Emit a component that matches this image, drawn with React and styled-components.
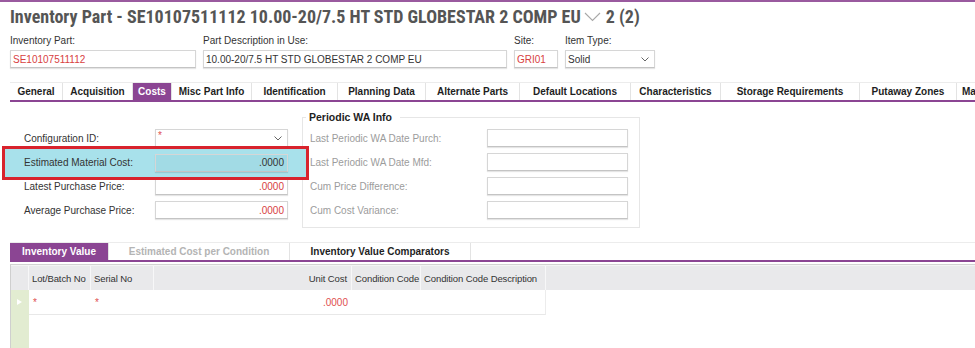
import React from 'react';
import styled, { createGlobalStyle } from 'styled-components';

const PURPLE = '#8b4593';

const GlobalStyle = createGlobalStyle`
  html, body { margin: 0; padding: 0; background: #fff; }
  body {
    font-family: "Liberation Sans", Arial, sans-serif;
    font-size: 10px;
    color: #333;
    width: 975px;
    height: 348px;
    overflow: hidden;
  }
  * { box-sizing: border-box; }
`;

const Page = styled.div`
  width: 975px;
  height: 348px;
  overflow: hidden;
  border-top: 2px solid #9a5a9f;
`;

const Title = styled.h1`
  margin: 4px 0 0 10px;
  display: flex;
  align-items: center;
  white-space: nowrap;
  font-family: "Liberation Sans Narrow", "Roboto Condensed", "Liberation Sans", sans-serif;
  font-weight: 700;
  font-size: 18px;
  line-height: 22px;
  color: #555;
`;

const TitleChevron = styled.svg`
  width: 17px;
  height: 10px;
  margin: 0 5px 0 3px;
  flex: none;
`;

const FieldRow = styled.div`
  display: flex;
  gap: 7px;
  margin: 6px 0 0 10px;
`;

const Field = styled.div`
  display: flex;
  flex-direction: column;
  width: ${(p) => p.$w}px;
  flex: none;
`;

const FieldLabel = styled.label`
  font-size: 10px;
  line-height: 14px;
  color: #333;
  margin-bottom: 2px;
  white-space: nowrap;
`;

const Box = styled.div`
  position: relative;
  height: 18px;
  width: ${(p) => (p.$w ? `${p.$w}px` : '100%')};
  flex: none;
  display: flex;
  align-items: center;
  justify-content: ${(p) => (p.$right ? 'flex-end' : 'flex-start')};
  padding: 0 3px 0 2px;
  border: 1px solid #d6d6d6;
  border-bottom-color: #c4c4c4;
  box-shadow: 0 1px 1px rgba(0, 0, 0, 0.1);
  background: ${(p) => (p.$bg ? p.$bg : '#fff')};
  font-size: 10px;
  color: ${(p) => (p.$red ? '#d8413f' : '#333')};
  white-space: nowrap;
  overflow: hidden;
`;

const SelectArrow = styled.svg`
  position: absolute;
  right: 5px;
  top: 6px;
  width: 8px;
  height: 5px;
`;

const Asterisk = styled.span`
  color: #e05050;
  font-size: 10px;
  line-height: 10px;
  align-self: flex-start;
  margin-top: 1px;
`;

const TabStrip = styled.div`
  display: flex;
  height: 20px;
  margin: ${(p) => p.$mt}px 0 0 10px;
  border-top: 1px solid #ececec;
  border-bottom: 2px solid ${PURPLE};
  overflow: hidden;
`;

const Tab = styled.div`
  flex: none;
  width: ${(p) => p.$w}px;
  display: flex;
  align-items: center;
  justify-content: ${(p) => (p.$left ? 'flex-start' : 'center')};
  padding-left: ${(p) => (p.$left ? '5px' : '0')};
  font-weight: 700;
  font-size: 10px;
  white-space: nowrap;
  border-right: 1px solid #e3e3e3;
  background: ${(p) => (p.$active ? PURPLE : '#fff')};
  color: ${(p) => (p.$active ? '#fff' : p.$disabled ? '#b4b4b4' : '#1e1e1e')};
`;

const Content = styled.div`
  display: flex;
  align-items: flex-start;
  height: 126px;
`;

const LeftCol = styled.div`
  width: 302px;
  flex: none;
  padding: 24px 0 0 24px;
`;

const FormRow = styled.div`
  display: flex;
  align-items: center;
  height: 24px;
`;

const HighlightRow = styled.div`
  position: relative;
  z-index: 1;
  display: flex;
  align-items: center;
  height: 34px;
  margin: -4px -7px -6px -22px;
  padding: 0 0 1px 19px;
  border: 3px solid #d8232d;
  background: #a8e1eb;
`;

const RowLabel = styled.span`
  flex: none;
  width: ${(p) => p.$w}px;
  white-space: nowrap;
  font-size: 10px;
  color: ${(p) => (p.$muted ? '#9c9c9c' : '#333')};
`;

const GroupBox = styled.fieldset`
  margin: 8px 0 0 0;
  padding: 2px 11px 5px 7px;
  width: 338px;
  flex: none;
  border: 1px solid #e6e6e6;
  min-width: 0;
`;

const GroupTitle = styled.legend`
  margin-left: -4px;
  padding: 0 8px 0 3px;
  font-weight: 700;
  font-size: 10.5px;
  line-height: 14px;
  color: #1e1e1e;
`;

const Grid = styled.div`
  margin: 2px 0 0 10px;
  border-top: 1px solid #d2d2d2;
  border-left: 1px solid #cfcfcf;
  height: 84px;
  display: flex;
  flex-direction: column;
`;

const HeaderRow = styled.div`
  display: flex;
  height: 25px;
  flex: none;
  background: #e9e9eb;
  border-top: 1px solid #f4f4f4;
`;

const HeadCell = styled.div`
  flex: ${(p) => (p.$w ? 'none' : '1')};
  width: ${(p) => (p.$w ? `${p.$w}px` : 'auto')};
  display: flex;
  align-items: center;
  justify-content: ${(p) => (p.$right ? 'flex-end' : 'flex-start')};
  padding: 0 ${(p) => (p.$right ? '4px' : '0')} 0 ${(p) => (p.$right ? '0' : '3px')};
  border-right: ${(p) => (p.$w ? '1px solid #f7f7f8' : 'none')};
  font-size: 9.5px;
  letter-spacing: -0.1px;
  color: #333;
  white-space: nowrap;
  overflow: hidden;
`;

const Body = styled.div`
  display: flex;
  flex: 1;
`;

const Indicator = styled.div`
  width: 18px;
  flex: none;
  background: #e2ecd1;
  padding-top: 9px;
  padding-left: 6px;
`;

const Marker = styled.div`
  width: 0;
  height: 0;
  border-left: 5px solid #fff;
  border-top: 3.5px solid transparent;
  border-bottom: 3.5px solid transparent;
`;

const Rows = styled.div`
  width: 517px;
  flex: none;
`;

const DataRow = styled.div`
  display: flex;
  height: 25px;
  border-bottom: 1px solid #e8e8e8;
  border-right: 1px solid #ececec;
`;

const DataCell = styled.div`
  flex: none;
  width: ${(p) => p.$w}px;
  display: flex;
  align-items: center;
  justify-content: ${(p) => (p.$right ? 'flex-end' : 'flex-start')};
  padding: 0 ${(p) => (p.$right ? '4px' : '0')} 0 ${(p) => (p.$right ? '0' : '4px')};
  color: #e05050;
  font-size: 10px;
`;

const ArrowIcon = () => (
  <SelectArrow viewBox="0 0 8 5">
    <polyline points="0.5,0.5 4,4 7.5,0.5" fill="none" stroke="#666" strokeWidth="1" />
  </SelectArrow>
);

const topTabs = [
  ['General', 53],
  ['Acquisition', 70],
  ['Costs', 39, true],
  ['Misc Part Info', 80],
  ['Identification', 86],
  ['Planning Data', 88],
  ['Alternate Parts', 94],
  ['Default Locations', 111],
  ['Characteristics', 90],
  ['Storage Requirements', 139],
  ['Putaway Zones', 97],
  ['Manufacturing', 90, false, true],
];

export default function App() {
  return (
    <Page>
      <GlobalStyle />
      <Title>
        Inventory Part - SE10107511112 10.00-20/7.5 HT STD GLOBESTAR 2 COMP EU
        <TitleChevron viewBox="0 0 17 10">
          <polyline points="1,1 8.5,8.5 16,1" fill="none" stroke="#a8a8a8" strokeWidth="1.1" />
        </TitleChevron>
        2 (2)
      </Title>

      <FieldRow>
        <Field $w={186}>
          <FieldLabel>Inventory Part:</FieldLabel>
          <Box $red>SE10107511112</Box>
        </Field>
        <Field $w={304}>
          <FieldLabel>Part Description in Use:</FieldLabel>
          <Box>10.00-20/7.5 HT STD GLOBESTAR 2 COMP EU</Box>
        </Field>
        <Field $w={44}>
          <FieldLabel>Site:</FieldLabel>
          <Box $red>GRI01</Box>
        </Field>
        <Field $w={90}>
          <FieldLabel>Item Type:</FieldLabel>
          <Box>
            Solid
            <ArrowIcon />
          </Box>
        </Field>
      </FieldRow>

      <TabStrip $mt={14}>
        {topTabs.map(([t, w, a, l]) => (
          <Tab key={t} $w={w} $active={a} $left={l}>
            {t}
          </Tab>
        ))}
      </TabStrip>

      <Content>
        <LeftCol>
          <FormRow>
            <RowLabel $w={131}>Configuration ID:</RowLabel>
            <Box $w={133}>
              <Asterisk>*</Asterisk>
              <ArrowIcon />
            </Box>
          </FormRow>
          <HighlightRow>
            <RowLabel $w={131}>Estimated Material Cost:</RowLabel>
            <Box $w={133} $right $bg="#a2dbe5">
              .0000
            </Box>
          </HighlightRow>
          <FormRow>
            <RowLabel $w={131}>Latest Purchase Price:</RowLabel>
            <Box $w={133} $right $red>
              .0000
            </Box>
          </FormRow>
          <FormRow>
            <RowLabel $w={131}>Average Purchase Price:</RowLabel>
            <Box $w={133} $right $red>
              .0000
            </Box>
          </FormRow>
        </LeftCol>

        <GroupBox>
          <GroupTitle>Periodic WA Info</GroupTitle>
          <FormRow>
            <RowLabel $w={177} $muted>Last Periodic WA Date Purch:</RowLabel>
            <Box $w={141} />
          </FormRow>
          <FormRow>
            <RowLabel $w={177} $muted>Last Periodic WA Date Mfd:</RowLabel>
            <Box $w={141} />
          </FormRow>
          <FormRow>
            <RowLabel $w={177} $muted>Cum Price Difference:</RowLabel>
            <Box $w={141} />
          </FormRow>
          <FormRow>
            <RowLabel $w={177} $muted>Cum Cost Variance:</RowLabel>
            <Box $w={141} />
          </FormRow>
        </GroupBox>
      </Content>

      <TabStrip $mt={14}>
        <Tab $w={99} $active>
          Inventory Value
        </Tab>
        <Tab $w={181} $disabled>
          Estimated Cost per Condition
        </Tab>
        <Tab $w={181}>Inventory Value Comparators</Tab>
      </TabStrip>

      <Grid>
        <HeaderRow>
          <HeadCell $w={18} />
          <HeadCell $w={62}>Lot/Batch No</HeadCell>
          <HeadCell $w={63}>Serial No</HeadCell>
          <HeadCell $w={198} $right>
            Unit Cost
          </HeadCell>
          <HeadCell $w={69}>Condition Code</HeadCell>
          <HeadCell $w={125}>Condition Code Description</HeadCell>
          <HeadCell />
        </HeaderRow>
        <Body>
          <Indicator>
            <Marker />
          </Indicator>
          <Rows>
            <DataRow>
              <DataCell $w={62}>*</DataCell>
              <DataCell $w={63}>*</DataCell>
              <DataCell $w={198} $right>
                .0000
              </DataCell>
              <DataCell $w={69} />
              <DataCell $w={124} />
            </DataRow>
          </Rows>
        </Body>
      </Grid>
    </Page>
  );
}
